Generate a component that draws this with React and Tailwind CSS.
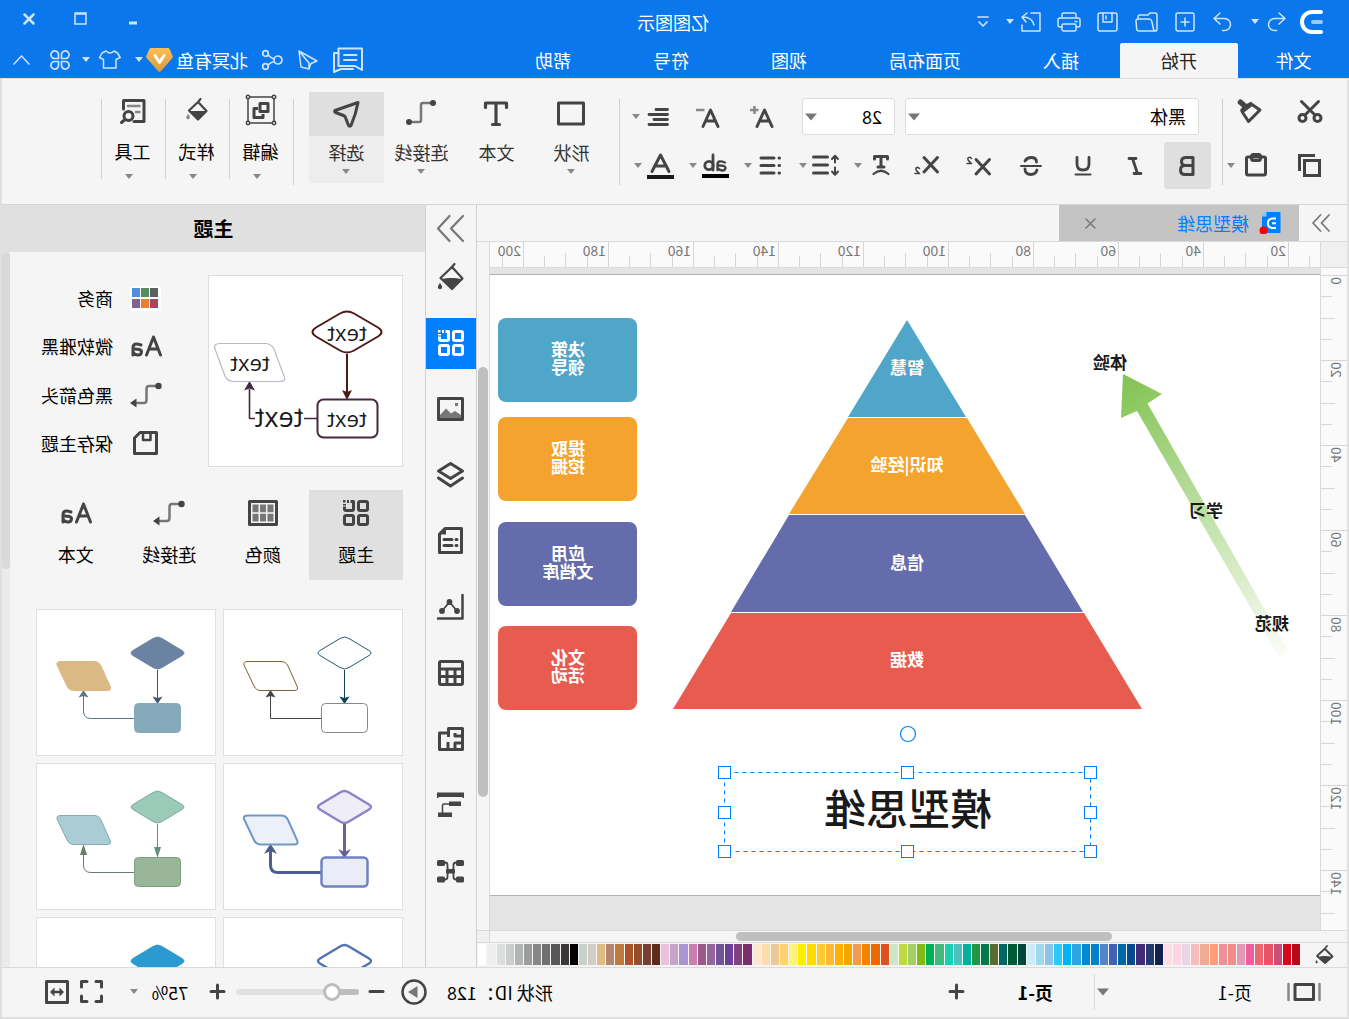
import React from "react";

const SWATCHES = (
  "b50a17 d8071b c94f77 e85467 eb6873 ea5f9c e398b5 ef8e88 f08e9a ff9e7a f0ab94 f6bebb ead5e6 ffd4e5 ffdfe5 " +
  "112250 223a70 442b78 064a8c 0067a5 4062b0 5485c8 0080cd 008bd0 2ca5e0 00b4f4 2fc8fb 8bc3eb 9ed8ef ccebf5 " +
  "00473a 005a36 00695f 576d30 007a4a 1f9744 00b09d 50bfc0 19cfb2 47b87d 00b056 82bb13 a3d065 c0d93f cde6c7 " +
  "e2501f eb6a00 f08400 f29954 f0a800 ffb000 ffb833 fbcb34 ffdb00 ffed00 fff180 ffd16f ebca98 ffdbac fee7d0 " +
  "7a2e70 834083 6a4196 745398 95659d 9c5a8a cd7cb0 ac94d0 c6a4c9 ebc2db 5e2b1c 773e31 954e2a ab5427 bf793f " +
  "b5866d debb87 d4ccc6 c8d2ca 000000 3d3838 595757 707070 888888 9c9e9d b3b5b5 cccece dcdddd eeeeee ffffff"
).split(" ");

function Icon({ w = 24, h = 24, sw = 2, children }) {
  return (
    <svg
      width={w}
      height={h}
      viewBox={`0 0 ${w} ${h}`}
      fill="none"
      stroke="currentColor"
      strokeWidth={sw}
      strokeLinejoin="round"
      strokeLinecap="round"
      className="shrink-0 overflow-visible"
      aria-hidden="true"
    >
      {children}
    </svg>
  );
}

const solid = { fill: "currentColor", stroke: "none" };

function Caret({ wide }) {
  return wide ? (
    <svg width="12" height="8" viewBox="0 0 12 8" className="shrink-0" aria-hidden="true">
      <path d="M0 0.5H12L6 7.5Z" fill="#777" />
    </svg>
  ) : (
    <svg width="8" height="5" viewBox="0 0 8 5" className="shrink-0" aria-hidden="true">
      <path d="M0 0H8L4 5Z" fill="currentColor" />
    </svg>
  );
}

function Btn({ label, className = "", children }) {
  return (
    <button type="button" aria-label={label} className={`flex shrink-0 items-center justify-center ${className}`}>
      {children}
    </button>
  );
}

/* ---------- shared icons ---------- */

const Bucket = () => (
  <Icon w={26} h={28} sw={2.2}>
    <path d="M9.500 1L13 5" />
    <path d="M12 4L23.500 15L12 26L1.500 15.500Z" />
    <path d="M2.500 16C8 14.500 17 14.500 22.500 16L12 26Z" {...solid} />
    <path d="M24 20c1.500 2 2.200 3 2.200 4a2.200 2.200 0 0 1-4.400 0c0-1 .7-2 2.200-4z" {...solid} />
  </Icon>
);

const ThemeGrid = () => (
  <Icon w={26} h={26} sw={3}>
    <rect x="1.500" y="1.500" width="9" height="9" rx="1.500" />
    <rect x="1.500" y="15.500" width="9" height="9" rx="1.500" />
    <rect x="15.500" y="15.500" width="9" height="9" rx="1.500" />
    <path d="M18.500 1.500H15.500V9A1.500 1.500 0 0 0 17 10.500H23A1.500 1.500 0 0 0 24.500 9V6.500" strokeLinecap="butt" />
    <path d="M20 0h2v3h-2zM23.500 0H26v2.500h-2.500zM23 4h3v1.500h-3z" {...solid} />
  </Icon>
);

const Elbow = () => (
  <Icon w={32} h={26} sw={2.500}>
    <g stroke="#777">
      <path d="M5 4H13Q15.500 4 15.500 7V18Q15.500 21 18 21H25" />
    </g>
    <circle cx="3.500" cy="4" r="3.200" {...solid} />
    <path d="M25.500 16.500L32 21L25.500 25.500Z" {...solid} />
  </Icon>
);

const AaIcon = () => (
  <Icon w={32} h={22} sw={3}>
    <path d="M1.500 20L8.500 2L15.500 20M4 14H13" />
    <path d="M21 10Q29 7 29 13V20M29 14Q20.500 13.500 20.500 17Q21 20.500 24.500 20Q28 19.500 29 17" />
  </Icon>
);

/* ---------- title bar ---------- */

function TitleBar() {
  return (
    <div className="flex h-[43px] items-center text-[#cfe3fb]">
      <div className="ml-[26px] flex w-6 items-center text-white">
        <Icon w={24} h={24} sw={4}>
          <path d="M2 2H11A10 10 0 0 1 11 22H2" />
          <path d="M2 12H10" stroke="#9cc8f8" strokeLinecap="round" />
        </Icon>
      </div>
      <Btn label="撤销" className="ml-1 w-9">
        <Icon w={19} h={20} sw={1.500}>
          <path d="M7 1L1 6.500L7 12M1 6.500H11.500A6 6 0 0 1 11.500 18.500H9.500" />
        </Icon>
      </Btn>
      <Btn label="撤销选项" className="w-2">
        <Caret />
      </Btn>
      <Btn label="重做" className="ml-2 w-10">
        <Icon w={19} h={20} sw={1.500}>
          <path d="M12 1L18 6.500L12 12M18 6.500H7.500A6 6 0 0 0 7.500 18.500H9.500" />
        </Icon>
      </Btn>
      <Btn label="新建" className="w-9">
        <Icon w={20} h={20} sw={1.500}>
          <rect x="1" y="1" width="18" height="18" rx="2" />
          <path d="M10 6V14M6 10H14" />
        </Icon>
      </Btn>
      <Btn label="打开" className="w-10">
        <Icon w={23} h={20} sw={1.500}>
          <path d="M1 17V3Q1 1 3 1H8L10 3H18Q20 3 20 5V7M2 19H19Q21 19 21.300 17L22 9Q22 7 20 7H9Q7 7 6.300 9L4.500 17Q4 19 2.500 19Q1 19 1 17" />
        </Icon>
      </Btn>
      <Btn label="保存" className="w-[38px]">
        <Icon w={21} h={20} sw={1.500}>
          <rect x="1" y="1" width="19" height="18" rx="2" />
          <path d="M6 1V10H15V1M12 4V7" />
        </Icon>
      </Btn>
      <Btn label="打印" className="w-10">
        <Icon w={24} h={20} sw={1.500}>
          <path d="M5 6V3Q5 1 7 1H17Q19 1 19 3V6M5 15H3Q1 15 1 13V8Q1 6 3 6H21Q23 6 23 8V13Q23 15 21 15H19M4 9.500H6" />
          <rect x="5" y="12" width="14" height="7" rx="1.500" />
        </Icon>
      </Btn>
      <Btn label="导出" className="w-9">
        <Icon w={20} h={20} sw={1.500}>
          <path d="M10 1H1V19H19V13M7 13Q9 5 18 5M14 1L19 5L15 10" />
        </Icon>
      </Btn>
      <Btn label="导出选项" className="w-1.5">
        <Caret />
      </Btn>
      <Btn label="自定义快速访问栏" className="ml-[18px] w-3">
        <Icon w={12} h={12} sw={1.700}>
          <path d="M1 1H11M2 6L6 10L10 6" />
        </Icon>
      </Btn>
      <h1 className="mx-auto pr-[210px] text-lg leading-6 whitespace-nowrap text-white">亿图图示</h1>
      <Btn label="最小化" className="w-[52px]">
        <Icon w={10} h={12} sw={3}>
          <path d="M1 7H9" strokeLinecap="butt" />
        </Icon>
      </Btn>
      <Btn label="最大化" className="w-[52px] pb-1.5">
        <Icon w={13} h={13} sw={1.500}>
          <path d="M1 1H12V12H1ZM1 2H12" strokeLinejoin="miter" />
        </Icon>
      </Btn>
      <Btn label="关闭" className="mr-[3px] w-[52px] pb-1.5">
        <Icon w={12} h={12} sw={2.500}>
          <path d="M1.500 1.500L10.500 10.500M10.500 1.500L1.500 10.500" />
        </Icon>
      </Btn>
    </div>
  );
}

function MenuBar() {
  return (
    <div className="flex h-[35px] items-stretch text-lg text-white">
      <nav className="flex items-stretch">
        <button type="button" className="w-[111px] pb-0.5">文件</button>
        <button type="button" className="rounded-t-xs bg-[#f5f5f5] px-[41px] pb-0.5 text-[#222]">开始</button>
        {["插入", "页面布局", "视图", "符号", "帮助"].map((t) => (
          <button type="button" key={t} className="px-[41px] pb-0.5">
            {t}
          </button>
        ))}
      </nav>
      <div className="ml-auto flex items-center pr-3 pb-0.5 text-[#cfe3fb]">
        <Btn label="消息" className="w-9">
          <Icon w={30} h={26} sw={2}>
            <path d="M1 1.500H24.500V19H8L1 23Z" />
            <path d="M6.500 8H19M6.500 13H19" />
            <path d="M24.500 6H29V25L22 22H10" />
          </Icon>
        </Btn>
        <Btn label="发送" className="ml-2 w-7">
          <Icon w={20} h={20} sw={1.500}>
            <path d="M19 1L1 11L7 13.500L9 19L17 17L19 1L9 13V19" />
          </Icon>
        </Btn>
        <Btn label="分享" className="ml-2 w-7">
          <Icon w={22} h={20} sw={1.700}>
            <circle cx="5" cy="10" r="4" />
            <circle cx="17.500" cy="3.500" r="2.800" />
            <circle cx="17.500" cy="16.500" r="2.800" />
            <path d="M9 9Q12.500 7.500 15 5M9 11.500Q12.500 12.500 15 15" />
          </Icon>
        </Btn>
        <span className="ml-2.5 text-lg whitespace-nowrap text-white">北冥有鱼</span>
        <Btn label="会员" className="mr-px ml-0.5 w-7">
          <svg width="27" height="24" viewBox="0 0 27 24" aria-hidden="true">
            <defs>
              <linearGradient id="vip" x1="0" y1="0" x2="0" y2="1">
                <stop offset="0" stopColor="#fdbe52" />
                <stop offset="1" stopColor="#d99b3c" />
              </linearGradient>
            </defs>
            <path d="M5 0H22Q23 0 23.600 1L26.600 8Q27 9 26.400 10L14.800 23.300Q13.500 24.500 12.200 23.300L.6 10Q0 9 .4 8L3.400 1Q4 0 5 0Z" fill="url(#vip)" />
            <path d="M9 7.500L13.500 14.500L18 7.500" fill="none" stroke="#fff" strokeWidth="3" strokeLinecap="round" strokeLinejoin="round" />
          </svg>
        </Btn>
        <Btn label="会员选项" className="w-3">
          <Caret />
        </Btn>
        <Btn label="皮肤" className="ml-[9px] w-7">
          <Icon w={22} h={19} sw={1.500}>
            <path d="M7 1Q11 5 15 1L19 3L21.500 7.500L17.500 9.500V18H5V9.500L.8 7.500L3.500 3Z" />
          </Icon>
        </Btn>
        <Btn label="皮肤选项" className="ml-1 w-3">
          <Caret />
        </Btn>
        <Btn label="应用" className="ml-2 w-6">
          <Icon w={20} h={20} sw={1.700}>
            <path d="M8.500 8.500H5A3.800 3.800 0 1 1 8.500 5ZM11.500 8.500H15A3.800 3.800 0 1 0 11.500 5ZM8.500 11.500H5A3.800 3.800 0 1 0 8.500 15ZM11.500 11.500H15A3.800 3.800 0 1 1 11.500 15Z" />
          </Icon>
        </Btn>
        <Btn label="收起功能区" className="ml-4 w-5">
          <Icon w={17} h={10} sw={1.500}>
            <path d="M1 9L8.500 1L16 9" />
          </Icon>
        </Btn>
      </div>
    </div>
  );
}

/* ---------- ribbon ---------- */

function Picker({ label, value, className }) {
  return (
    <label className={`flex h-[37px] items-center rounded-[3px] border border-[#dcdcdc] bg-white pr-0.5 ${className}`}>
      <select
        aria-label={label}
        defaultValue={value}
        className="h-[35px] min-w-0 flex-1 appearance-none bg-transparent pl-3 text-lg leading-[33px] text-black outline-none"
      >
        <option>{value}</option>
      </select>
      <Caret wide />
    </label>
  );
}

function Pair({ label, children }) {
  return (
    <Btn label={label} className="h-[47px] gap-[5px]">
      <span className="flex w-7 justify-center">{children}</span>
      <span className="text-[#888]">
        <Caret />
      </span>
    </Btn>
  );
}

function BigTool({ label, caret = true, active, children }) {
  return (
    <button
      type="button"
      className={`flex w-[75px] flex-col items-center rounded-xs pb-[9px] text-[#333] ${active ? "bg-[#ededed]" : ""}`}
    >
      <span className={`flex h-11 w-full items-center justify-center text-[#444] ${active ? "bg-[#dfdfdf]" : ""}`}>{children}</span>
      <span className="mt-[3px] text-lg leading-[27px]">{label}</span>
      <span className={`mt-[3px] text-[#888] ${caret ? "" : "invisible"}`}>
        <Caret />
      </span>
    </button>
  );
}

function GroupTool({ label, children }) {
  return (
    <button type="button" className="flex w-16 flex-col items-center border-r border-[#cfcfcf] text-black">
      <span className="flex h-6 items-center text-[#444]">{children}</span>
      <span className="mt-[15px] ml-0.5 text-lg leading-[27px]">{label}</span>
      <span className="mt-[9px] ml-2 text-[#888]">
        <Caret />
      </span>
    </button>
  );
}

const cell = "h-[47px] w-[52px]";

function Ribbon() {
  return (
    <div className="flex h-[126px] shrink-0 items-start border-b border-[#d6d6d6] bg-[#f5f5f5] text-[#444]">
      <div className="mt-5 flex h-[86px] w-[125px] flex-col justify-between border-r border-[#cfcfcf] pl-[23px]">
        <div className="flex h-6 items-center">
          <Btn label="剪切" className="w-7">
            <Icon w={24} h={23} sw={3}>
              <circle cx="4.500" cy="18" r="3.500" />
              <circle cx="19.500" cy="18" r="3.500" />
              <path d="M3.500 1.500L17 15M20.500 1.500L7 15" />
            </Icon>
          </Btn>
          <Btn label="格式刷" className="ml-8 w-7">
            <Icon w={25} h={24} sw={3}>
              <path d="M10 5.500L2 11L13.500 22.500L20 12.500" />
              <path d="M10.500 2.500L15.500 5L19.500 8L22 11L19.500 14.500L9 6.500Z" {...solid} />
              <path d="M16 8L21.500 3.200" strokeWidth="5.500" />
            </Icon>
          </Btn>
        </div>
        <div className="mb-1 flex h-8 items-center">
          <Btn label="复制" className="w-7">
            <Icon w={23} h={23} sw={3}>
              <rect x="2" y="6.500" width="15" height="15" strokeLinejoin="miter" transform="translate(-0.500 0)" />
              <path d="M6 1.500H21.500V17" strokeLinecap="butt" strokeLinejoin="miter" />
            </Icon>
          </Btn>
          <Btn label="粘贴" className="ml-[26px] w-7">
            <Icon w={22} h={24} sw={3}>
              <rect x="1.500" y="4" width="19" height="18" rx="1.500" />
              <rect x="6.500" y="1.500" width="9" height="6" rx="2" />
            </Icon>
          </Btn>
          <Btn label="粘贴选项" className="ml-[7px] w-2 text-[#888]">
            <Caret />
          </Btn>
        </div>
      </div>

      <div className="mt-[19px] ml-[11px] flex h-[92px] flex-col gap-[7px]">
        <div className="flex h-[37px] items-center pl-3">
          <Picker label="字体" value="黑体" className="w-[294px]" />
          <Picker label="字号" value="28" className="ml-2.5 w-[93px]" />
          <Btn label="增大字号" className="ml-7 w-6">
            <Icon w={24} h={22} sw={3}>
              <path d="M2 20.500L9.500 4L17 20.500M4.500 15H14.500" />
              <path d="M19.500 0V8M15.500 4H24" stroke="#888" strokeWidth="2.500" strokeLinecap="butt" />
            </Icon>
          </Btn>
          <Btn label="减小字号" className="ml-[30px] w-6">
            <Icon w={24} h={22} sw={3}>
              <path d="M2 20.500L9.500 4L17 20.500M4.500 15H14.500" />
              <path d="M15.500 4H24" stroke="#888" strokeWidth="2.500" strokeLinecap="butt" />
            </Icon>
          </Btn>
          <Btn label="对齐" className="ml-[23px] gap-[5px]">
            <span className="flex w-7 justify-center">
              <Icon w={21} h={18} sw={2.800}>
                <path d="M1.500 1.500H13M1.500 6.500H20M1.500 11.500H15M1.500 16.500H20" />
              </Icon>
            </span>
            <span className="text-[#888]">
              <Caret />
            </span>
          </Btn>
        </div>
        <div className="flex h-[47px] items-center">
          <Btn label="加粗" className="size-[47px] rounded-[3px] bg-[#dfdfdf]">
            <Icon w={16} h={20} sw={3}>
              <path d="M2 1.500H9Q13.500 1.500 13.500 5.500Q13.500 9.500 9 9.500H2H10Q14.500 9.500 14.500 14Q14.500 18.500 10 18.500H2Z" />
            </Icon>
          </Btn>
          <Btn label="斜体" className={`ml-[3px] ${cell}`}>
            <Icon w={16} h={18} sw={2.800}>
              <path d="M7 1.500H14M2 16.500H9M10.500 1.500L5.500 16.500" />
            </Icon>
          </Btn>
          <Btn label="下划线" className={cell}>
            <Icon w={16} h={19} sw={2.800}>
              <path d="M2 1.500V8Q2 14 8 14Q14 14 14 8V1.500" />
              <path d="M.5 18.500H15.500" strokeWidth="2" />
            </Icon>
          </Btn>
          <Btn label="删除线" className={cell}>
            <Icon w={22} h={20} sw={2.800}>
              <path d="M17 5Q15 1.500 11 1.500Q5.500 1.500 5.500 6M5 14Q6.500 18.500 11 18.500Q17 18.500 17 13" />
              <path d="M1 10H21" strokeWidth="2" />
            </Icon>
          </Btn>
          <Btn label="上标" className={cell}>
            <Icon w={24} h={19} sw={3}>
              <path d="M1.500 3.500L15 18M15 3.500L1.500 18" />
              <path d="M19.500 2.500Q21 .5 23 2Q24 4 19.500 7.500H24" strokeWidth="1.500" />
            </Icon>
          </Btn>
          <Btn label="下标" className={cell}>
            <Icon w={24} h={19} sw={3}>
              <path d="M1.500 1.500L15 16M15 1.500L1.500 16" />
              <path d="M19.500 12.500Q21 10.500 23 12Q24 14 19.500 17.500H24" strokeWidth="1.500" />
            </Icon>
          </Btn>
          <div className="ml-1.5 flex gap-3.5">
            <Pair label="文字弧形">
              <Icon w={18} h={21} sw={3}>
                <path d="M2.500 4V1.500H15.500V4M9 1.500V11.500M6 12H12" />
                <path d="M1.500 19Q9 12.500 16.500 19" strokeWidth="2.200" />
              </Icon>
            </Pair>
            <Pair label="行距">
              <Icon w={27} h={21} sw={3}>
                <path d="M11.500 2H25.500M11.500 10H25.500M11.500 18H25.500" />
                <path d="M4 1V7.500M1 4L4 .8L7 4M4 12.500V19M1 16.500L4 19.700L7 16.500" strokeWidth="2" />
              </Icon>
            </Pair>
            <Pair label="项目符号">
              <Icon w={21} h={19} sw={3}>
                <path d="M1.500 2H2M1.500 9.500H2M1.500 17H2M7 2H20M7 9.500H20M7 17H20" />
              </Icon>
            </Pair>
            <Pair label="突出显示">
              <Icon w={27} h={25} sw={2.800}>
                <path d="M4 9.500Q11.500 6.500 11.500 11.500V17M11.500 12.500Q3.500 12 3.500 15Q4 18 7 17.500Q10 17 11.500 15" strokeWidth="2.400" />
                <path d="M16 2V17" />
                <circle cx="20" cy="12.500" r="4.200" />
                <path d="M0 21H27V25H0Z" fill="#000" stroke="none" />
              </Icon>
            </Pair>
            <Pair label="字体颜色">
              <Icon w={27} h={26} sw={3}>
                <path d="M5 18.500L13.500 2L22 18.500M7.500 13H19.500" />
                <path d="M0 22H27V26H0Z" fill="#1a1a1a" stroke="none" />
              </Icon>
            </Pair>
          </div>
        </div>
      </div>

      <div className="mt-5 ml-3 h-[86px] border-r border-[#cfcfcf]" />
      <div className="mt-[13px] ml-2.5 flex">
        <BigTool label="形状">
          <Icon w={28} h={26} sw={3}>
            <path d="M1.500 2H26.500V23H1.500Z" />
          </Icon>
        </BigTool>
        <BigTool label="文本" caret={false}>
          <Icon w={24} h={26} sw={3.200}>
            <path d="M1.500 6.500V2H22.500V6.500M12 2V23M8.500 23.500H15.500" />
          </Icon>
        </BigTool>
        <BigTool label="连接线">
          <Icon w={30} h={26} sw={2.500}>
            <path d="M5 2H13Q15 2 15 4V19Q15 21 17 21H25" stroke="#777" />
            <circle cx="3" cy="2" r="3" {...solid} />
            <circle cx="27" cy="21" r="3" {...solid} />
          </Icon>
        </BigTool>
        <BigTool label="选择" active>
          <Icon w={27} h={27} sw={3}>
            <path d="M2 1.500L25 9.500Q26 11 24.500 11.500L16.500 14.500Q15 15 14.500 16.500L11.500 24.500Q10.500 26 9 24.500Q4 13 2 1.500Z" />
          </Icon>
        </BigTool>
      </div>
      <div className="mt-5 ml-[15px] h-[86px] border-r border-[#cfcfcf]" />
      <div className="mt-5 flex">
        <GroupTool label="编辑">
          <Icon w={30} h={30} sw={1.500}>
            <path d="M2 1H28V27H2Z" />
            <g fill="#f5f5f5">
              <circle cx="2" cy="1" r="1.700" />
              <circle cx="28" cy="1" r="1.700" />
              <circle cx="2" cy="27" r="1.700" />
              <circle cx="28" cy="27" r="1.700" />
            </g>
            <path d="M8 7.500H16V15.500H8ZM18 12.500H22V21.500H13V18" strokeWidth="3" strokeLinecap="butt" />
          </Icon>
        </GroupTool>
        <GroupTool label="样式">
          <Icon w={22} h={24} sw={2.200}>
            <path d="M7.500 0L10 3L19 11.500L10 20.500L1.500 12L9 4" />
            <path d="M2 12H18.500L10 21Z" {...solid} />
            <path d="M20 15q2.500 3 1.500 4.500a2 2 0 0 1-3.500-1q0-1.500 2-3.500z" fill="#888" stroke="none" />
          </Icon>
        </GroupTool>
        <GroupTool label="工具">
          <Icon w={26} h={26} sw={3}>
            <path d="M12 23.500H2V2.500H22.500V11" />
            <path d="M6.500 8H18M6.500 14H10" stroke="#888" strokeWidth="2.500" />
            <circle cx="17.500" cy="18" r="4.500" />
            <path d="M21 21.500L24.500 24.500" />
          </Icon>
        </GroupTool>
      </div>
    </div>
  );
}

/* ---------- drawing area ---------- */

function DocumentTabs() {
  return (
    <div className="flex h-[37px] shrink-0 items-stretch border-b border-[#dadada] bg-[#f5f5f5]">
      <Btn label="展开左侧面板" className="w-12 pl-1 text-[#777]">
        <Icon w={18} h={18} sw={1.800}>
          <path d="M1 1L8.500 9L1 17M9.500 1L17 9L9.500 17" />
        </Icon>
      </Btn>
      <div className="flex w-60 items-center bg-[#c4c4c4] pl-[18px]">
        <svg width="22" height="22" viewBox="0 0 22 22" aria-hidden="true">
          <path d="M1.500 0H14.500L19 4.500V21H1.500Q.5 21 .5 20V1Q.5 0 1.500 0Z" fill="#0080ff" />
          <path d="M14.500 0L19 4.500H14.500Z" fill="#8cc6ff" />
          <path d="M5 6.500H9A4.800 4.800 0 0 1 9 16H5M5 11.300H9" fill="none" stroke="#fff" strokeWidth="2" />
          <circle cx="17.500" cy="18.500" r="4" fill="#f00" />
        </svg>
        <span className="ml-2.5 text-lg whitespace-nowrap text-[#0080ff]">模型思维</span>
        <Btn label="关闭标签" className="mr-6 ml-auto w-4 text-[#777]">
          <Icon w={11} h={11} sw={1.500}>
            <path d="M1 1L10 10M10 1L1 10" />
          </Icon>
        </Btn>
      </div>
    </div>
  );
}

function TopRuler() {
  return (
    <div className="flex h-[26px] shrink-0 border-b border-[#dadada]">
      <div className="w-[27px] shrink-0 border-r border-[#dadada] bg-[#f0f0f0]" />
      <div className="flex min-w-0 flex-1 overflow-hidden bg-[#fafafa]">
        <div className="-ml-[54px] flex">
          {Array.from({ length: 11 }, (_, i) => (
            <div key={i} className="flex w-[85px] shrink-0 items-end">
              <div className="h-full flex-1 border-l border-[#d6d6d6]">
                {i > 0 && <span className="block w-0 pl-0.5 text-sm leading-4 text-[#777]">{i * 20}</span>}
              </div>
              <div className="h-[11px] flex-1 border-l border-[#d6d6d6]" />
              <div className="h-3.5 flex-1 border-l border-[#d6d6d6]" />
              <div className="h-[11px] flex-1 border-l border-[#d6d6d6]" />
            </div>
          ))}
        </div>
      </div>
    </div>
  );
}

function SideRuler() {
  return (
    <div className="flex w-[27px] shrink-0 flex-col overflow-hidden border-r border-[#dadada] bg-[#fafafa] pt-[7px]">
      {Array.from({ length: 8 }, (_, i) => (
        <div key={i} className="flex h-[85px] shrink-0 flex-col items-end">
          <div className="relative w-full flex-1 border-t border-[#d6d6d6]">
            <span className="absolute top-px left-px rotate-180 text-sm leading-[18px] text-[#777] [writing-mode:vertical-rl]">
              {i * 20}
            </span>
          </div>
          <div className="w-[11px] flex-1 border-t border-[#d6d6d6]" />
          <div className="w-3.5 flex-1 border-t border-[#d6d6d6]" />
          <div className="w-[11px] flex-1 border-t border-[#d6d6d6]" />
        </div>
      ))}
    </div>
  );
}

const LAYERS = [
  { fill: "#4fa6c9", points: "413,52 354,149 472,149", y: 106, text: "智慧" },
  { fill: "#f3a32e", points: "353,150 295,246 531,246 472,150", y: 203, text: "知识|经验" },
  { fill: "#656cab", points: "295,247 237,344 589,344 531,247", y: 301, text: "信息" },
  { fill: "#e85c4f", points: "236,345 178,441 647,441 589,345", y: 398, text: "数据" },
];

const BOXES = [
  { fill: "#4fa6c9", y: 50, lines: ["决策", "领导"] },
  { fill: "#f3a32e", y: 149, lines: ["提取", "挖掘"] },
  { fill: "#656cab", y: 254, lines: ["应用", "文档库"] },
  { fill: "#e85c4f", y: 358, lines: ["文化", "活动"] },
];

const HANDLES = [
  [229, 504], [412, 504], [595, 504], [229, 544], [595, 544], [229, 583], [412, 583], [595, 583],
];

function Diagram() {
  return (
    <svg width="830" height="620" viewBox="0 0 830 620" className="absolute top-0 left-0" textAnchor="middle">
      <defs>
        <linearGradient id="growth" gradientUnits="userSpaceOnUse" x1="198" y1="115" x2="36" y2="388">
          <stop offset="0" stopColor="#84c455" />
          <stop offset="1" stopColor="#fbfdf9" />
        </linearGradient>
      </defs>
      <path d="M197 106L158 126L172.500 135.500L31 384L41 389L183 143L199 150Z" fill="url(#growth)" />
      {LAYERS.map((l) => (
        <g key={l.text}>
          <polygon points={l.points} fill={l.fill} />
          <text x="413" y={l.y} fill="#fff" fontSize="17" fontWeight="700">{l.text}</text>
        </g>
      ))}
      {BOXES.map((b) => (
        <g key={b.y} fill="#fff" fontSize="17" fontWeight="700">
          <rect x="683" y={b.y} width="139" height="84" rx="8" fill={b.fill} />
          <text x="752" y={b.y + 38}>{b.lines[0]}</text>
          <text x="752" y={b.y + 56}>{b.lines[1]}</text>
        </g>
      ))}
      <g fill="#1a1a1a" fontSize="17" fontWeight="700">
        <text x="210" y="101">体验</text>
        <text x="114" y="249">学习</text>
        <text x="48" y="362">规范</text>
      </g>
      <text x="412" y="557" fill="#1a1a1a" fontSize="42" fontWeight="500">模型思维</text>
      <rect x="229.500" y="504.500" width="366" height="79" fill="none" stroke="#0080ff" strokeDasharray="4 4" />
      <circle cx="412" cy="466" r="7.500" fill="#fff" stroke="#0080ff" strokeWidth="1.200" />
      {HANDLES.map(([x, y]) => (
        <rect key={`${x}-${y}`} x={x - 5.500} y={y - 5.500} width="12" height="12" fill="#fff" stroke="#0080ff" />
      ))}
    </svg>
  );
}

function Workspace() {
  return (
    <main className="flex min-w-0 flex-1 flex-col">
      <DocumentTabs />
      <div className="flex min-h-0 flex-1">
        <div className="flex min-w-0 flex-1 flex-col">
          <TopRuler />
          <div className="flex min-h-0 flex-1">
            <SideRuler />
            <div className="relative min-w-0 flex-1 overflow-hidden bg-[#e4e4e4] pt-1.5">
              <div className="h-[622px] border-y border-[#b0b0b0] bg-white" />
              <Diagram />
            </div>
          </div>
        </div>
        <div className="w-[13px] shrink-0 border-l border-[#dadada] bg-[#f5f5f5] px-px pt-[125px]">
          <div className="h-[430px] rounded-full bg-[#bfbfbf]" />
        </div>
      </div>
      <div className="flex h-[13px] shrink-0 border-y border-[#dadada] bg-[#f5f5f5]">
        <div className="flex flex-1 items-center border-r border-[#dadada]">
          <div className="ml-[235px] h-[9px] w-[376px] rounded-full bg-[#bfbfbf]" />
        </div>
        <div className="w-3 bg-[#f0f0f0]" />
      </div>
      <div className="flex h-6 shrink-0 items-center bg-[#f5f5f5] pr-0.5 text-[#444]">
        <Btn label="填充颜色" className="w-[47px] pr-0.5">
          <Icon w={19} h={20} sw={1.800}>
            <path d="M7 1L9.500 4L17 11L9 18L1.500 11.500L8.500 4.500" />
            <path d="M2 12Q9 10 16.500 12L9 18.500Z" {...solid} />
            <path d="M17.500 15q1.500 2 .8 3a1.200 1.200 0 0 1-2-.5q0-1 1.200-2.500z" {...solid} />
          </Icon>
        </Btn>
        <div className="mb-px flex h-[21px] min-w-0 flex-1 gap-px">
          {SWATCHES.map((c) => (
            <button type="button" key={c} aria-label={`#${c}`} className="min-w-0 flex-1" style={{ backgroundColor: `#${c}` }} />
          ))}
        </div>
      </div>
    </main>
  );
}

/* ---------- tool strip ---------- */

const STRIP = [
  { label: "填充", icon: <Bucket /> },
  { label: "主题", icon: <ThemeGrid />, active: true },
  {
    label: "图片",
    icon: (
      <Icon w={27} h={24} sw={3}>
        <rect x="1.500" y="1.500" width="24" height="21" />
        <path d="M3 21V18L9 14L13 16.500L18 11.500L24 18V21Z" fill="#777" stroke="none" />
        <path d="M6 6H9V9H6Z" fill="#777" stroke="none" />
      </Icon>
    ),
  },
  {
    label: "图层",
    icon: (
      <Icon w={27} h={26} sw={3}>
        <path d="M13.500 1.500L25.500 9L13.500 16.500L1.500 9Z" />
        <path d="M1.500 16L13.500 24L25.500 16" />
      </Icon>
    ),
  },
  {
    label: "属性",
    icon: (
      <Icon w={25} h={27} sw={3}>
        <path d="M1.500 1.500H18L23.500 7V25.500H1.500Z" />
        <path d="M17 1V7.500H24Z" {...solid} />
        <path d="M6 12.500H7M11 12.500H19M6 18.500H7M11 18.500H19" />
      </Icon>
    ),
  },
  {
    label: "图表",
    icon: (
      <Icon w={27} h={26} sw={2.500}>
        <path d="M1.500 1V24.500H26" />
        <path d="M7 17L14.500 8L22 17" strokeWidth="1.800" />
        <circle cx="7" cy="17" r="2.900" {...solid} />
        <circle cx="14.500" cy="8" r="2.900" {...solid} />
        <circle cx="22" cy="17" r="2.900" {...solid} />
      </Icon>
    ),
  },
  {
    label: "表格",
    icon: (
      <Icon w={26} h={26} sw={3}>
        <rect x="1.500" y="1.500" width="23" height="23" rx="1.500" />
        <path d="M1.500 9H24.500M1.500 16.500H24.500M9 9V24M17 9V24" />
      </Icon>
    ),
  },
  {
    label: "平面图",
    icon: (
      <Icon w={26} h={24} sw={3}>
        <path d="M1.500 1.500H15.500V6H24.500V22.500H1.500Z" />
        <path d="M1.500 9H9V6M15.500 6V10M16 22V15M1.500 16H9V22" strokeLinecap="butt" />
      </Icon>
    ),
  },
  {
    label: "标题",
    icon: (
      <Icon w={27} h={25} sw={1.500}>
        <path d="M0 .5H27V6H25.500V5H1.500V6H0ZM3 9.500H15V14H3ZM12 20.500H26V25H12Z" {...solid} />
        <path d="M15 12H20Q21.500 12 21.500 13.500V21" />
      </Icon>
    ),
  },
  {
    label: "思维导图",
    icon: (
      <Icon w={27} h={24} sw={1.800}>
        <path d="M7 3.500H8Q10.500 3.500 10.500 6V8.500Q10.500 12 13.500 12Q16.500 12 16.500 15.500V18Q16.500 20.500 19 20.500H20M20 3.500H19Q16.500 3.500 16.500 6V8.500Q16.500 12 13.500 12Q10.500 12 10.500 15.500V18Q10.500 20.500 8 20.500H7" />
        <g {...solid}>
          <rect x="0" y="1" width="8" height="6" rx="1.500" />
          <rect x="19" y="1" width="8" height="6" rx="1.500" />
          <rect x="9" y="10" width="9" height="4.500" rx="1" />
          <rect x="0" y="17.500" width="8" height="6" rx="1.500" />
          <rect x="19" y="17.500" width="8" height="6" rx="1.500" />
        </g>
      </Icon>
    ),
  },
];

function ToolStrip() {
  return (
    <aside className="flex w-[52px] shrink-0 flex-col border-x border-[#cfcfcf] bg-[#f5f5f5] text-[#444]">
      <Btn label="收起面板" className="h-[47px] text-[#777]">
        <Icon w={27} h={27} sw={2.2}>
          <path d="M1 1L13 13.500L1 26M14.500 1L26 13.500L14.500 26" />
        </Icon>
      </Btn>
      <div className="flex flex-col gap-[15px]">
        {STRIP.map((s) => (
          <Btn key={s.label} label={s.label} className={`h-[51px] ${s.active ? "bg-[#0080ff] pb-0.5 text-white" : "pb-0.5"}`}>
            {s.icon}
          </Btn>
        ))}
      </div>
    </aside>
  );
}

/* ---------- theme panel ---------- */

function ThemeCard({ d, p, r, a, b, sw = 1, square, slim }) {
  return (
    <button type="button" aria-label="主题样式" className="h-[147px] border border-[#e0e0e0] bg-white">
      <svg width="178" height="145" viewBox="0 0 178 145" fill="none" strokeLinejoin="round" aria-hidden="true">
        <path
          d={square ? "M81 108.500H131.500V84" : "M81 108.500H124Q131.500 108.500 131.500 101V84"}
          stroke={b}
          strokeWidth={sw}
        />
        <path d="M57.500 60V90" stroke={a} strokeWidth={sw} />
        <path d={slim ? "M54 83H61L57.500 94Z" : "M52.500 86.500L57.500 88L62.500 86.500L57.500 94Z"} fill={a} />
        <path d={slim ? "M128 91H135L131.500 80Z" : "M126.500 87.500L131.500 86L136.500 87.500L131.500 80Z"} fill={b} />
        {sw > 2 && <path d="M51 85L57.500 88L64 85L57.500 94Z" fill={a} />}
        {sw > 2 && <path d="M125 90L131.500 87L138 90L131.500 80Z" fill={b} />}
        <path
          d="M53 28.500Q57.500 25.500 62 28.500L82 40.500Q86 43 82 45.500L62 57.500Q57.500 60.500 53 57.500L33 45.500Q29 43 33 40.500Z"
          fill={d[0]}
          stroke={d[1]}
          strokeWidth={sw > 2 ? 2.5 : sw}
        />
        <path
          d="M121 51.500H154Q159 51.500 158 55L148 76Q146 80.500 141 80.500H108Q103 80.500 105 76L114 56Q116 51.500 121 51.500Z"
          fill={p[0]}
          stroke={p[1]}
          strokeWidth={sw > 2 ? 2 : sw}
        />
        <rect x="34.500" y="93.500" width="46" height="29" rx="4" fill={r[0]} stroke={r[1]} strokeWidth={sw > 2 ? 2.5 : sw} />
      </svg>
    </button>
  );
}

const CARDS = [
  { d: ["#fff", "#1d5a75"], p: ["#fff", "#7a6233"], r: ["#fff", "#888"], a: "#0b4159", b: "#444", square: true },
  { d: ["#6b83a3", "#6b83a3"], p: ["#dab985", "#dab985"], r: ["#85abbb", "#85abbb"], a: "#46566e", b: "#5b7785" },
  { d: ["#efedf8", "#8c84cb"], p: ["#ecf1f9", "#7098c6"], r: ["#eaedf8", "#6d82c4"], a: "#6a6199", b: "#4d5f91", sw: 3 },
  { d: ["#9ccab9", "#7fa99a"], p: ["#aaccd5", "#86a9b4"], r: ["#99b69a", "#7f9f81"], a: "#678d80", b: "#64806a", slim: true },
  { d: ["#fff", "#5374b3"], p: ["#fff", "#5374b3"], r: ["#fff", "#5374b3"], a: "#5374b3", b: "#5374b3", sw: 3 },
  { d: ["#2b9ad0", "#2b9ad0"], p: ["#2b9ad0", "#2b9ad0"], r: ["#2b9ad0", "#2b9ad0"], a: "#2b9ad0", b: "#2b9ad0" },
];

function Preview() {
  return (
    <div className="w-[195px] shrink-0 border border-[#dedede] bg-white">
      <svg width="193" height="190" viewBox="0 0 193 190" fill="none" strokeLinejoin="round" textAnchor="middle" role="img" aria-label="主题预览">
        <g stroke="#4f1919" strokeWidth="2">
          <path d="M48 37.500Q55 33.500 62 37.500L86 51.500Q93 56 86 60.500L62 74.500Q55 78.500 48 74.500L24 60.500Q17 56 24 51.500Z" />
          <path d="M55 78V117" />
        </g>
        <path d="M50 114L55 116L60 114L55 124Z" fill="#4f1919" />
        <g stroke="#452a3f">
          <rect x="24.500" y="123.500" width="60" height="38" rx="6" strokeWidth="2" />
          <path d="M85 142.500H98M147 142.500H152.500V113" strokeWidth="1.600" />
        </g>
        <path d="M147 114.500L152.500 112.500L158 114.500L152.500 105Z" fill="#452a3f" />
        <path d="M137 67.500H182Q189 67.500 187 73L177 100Q174.500 105.500 168 105.500H122Q115.500 105.500 118 100L128 73Q131 67.500 137 67.500Z" stroke="#b9b9c6" strokeWidth="1.200" />
        <g fill="#1a1a1a" fontSize="22" fontFamily='"Open Sans", "Noto Sans", sans-serif'>
          <text x="55" y="65">text</text>
          <text x="55" y="151">text</text>
          <text x="152" y="95">text</text>
          <text x="123" y="151" fontSize="27">text</text>
        </g>
      </svg>
    </div>
  );
}

const PALETTE_CHIP = ["#5a625f", "#558c5d", "#4f8fdc", "#b53f62", "#f47a30", "#80648e"];

const OPTIONS = [
  {
    label: "商务",
    icon: (
      <svg width="31" height="25" viewBox="0 0 31 25" aria-hidden="true">
        <rect width="31" height="25" rx="2" fill="#fff" />
        {PALETTE_CHIP.map((c, i) => (
          <rect key={c} x={3 + (i % 3) * 9} y={i < 3 ? 2 : 13} width="8" height="9" fill={c} />
        ))}
      </svg>
    ),
  },
  { label: "微软雅黑", icon: <AaIcon /> },
  { label: "黑色箭头", icon: <Elbow /> },
  {
    label: "保存主题",
    icon: (
      <Icon w={25} h={24} sw={3}>
        <path d="M1.500 1.500H18L23.500 7V22.500H1.500Z" />
        <path d="M7.500 2V9H15V2" strokeWidth="2.500" />
      </Icon>
    ),
  },
];

const MODES = [
  { label: "主题", icon: <ThemeGrid />, active: true },
  {
    label: "颜色",
    icon: (
      <Icon w={30} h={26} sw={3}>
        <rect x="1.500" y="1.500" width="27" height="23" />
        <path d="M4.500 4.500H25.500V21.500H4.500Z" fill="#777" stroke="none" />
        <path d="M11.300 4V22M18.700 4V22M4 13H26" stroke="#f5f5f5" strokeWidth="1.500" strokeLinecap="butt" />
      </Icon>
    ),
  },
  { label: "连接线", icon: <Elbow /> },
  { label: "文本", icon: <AaIcon /> },
];

function ThemePanel() {
  return (
    <section className="flex w-[423px] shrink-0 flex-col bg-[#f5f5f5]">
      <h2 className="flex h-[47px] shrink-0 items-center justify-center bg-[#e0e0e0] text-xl leading-none font-bold text-black">
        主题
      </h2>
      <div className="flex min-h-0 flex-1">
        <div className="min-w-0 flex-1 overflow-hidden pt-[23px] pr-[26px] pl-[22px]">
          <div className="flex h-48">
            <Preview />
            <div className="-mt-px ml-11 flex flex-col">
              {OPTIONS.map((o) => (
                <button type="button" key={o.label} className="flex h-[49px] items-center text-[#444]">
                  <span className="flex w-9 justify-center">{o.icon}</span>
                  <span className="ml-[15px] text-lg whitespace-nowrap text-black">{o.label}</span>
                </button>
              ))}
            </div>
          </div>
          <div className="mt-[23px] mr-[-7px] grid grid-cols-4">
            {MODES.map((m) => (
              <button
                type="button"
                key={m.label}
                className={`flex h-[90px] flex-col items-center text-black ${m.active ? "bg-[#e0e0e0]" : ""}`}
              >
                <span className="flex h-[46px] items-center text-[#444]">{m.icon}</span>
                <span className="mt-[5px] text-lg leading-[27px]">{m.label}</span>
              </button>
            ))}
          </div>
          <div className="mt-[29px] grid grid-cols-2 gap-[7px]">
            {CARDS.map((c, i) => (
              <ThemeCard key={i} {...c} />
            ))}
          </div>
        </div>
        <div className="w-2 shrink-0 bg-[#ebebeb]">
          <div className="h-[317px] rounded-full bg-[#d9d9d9]" />
        </div>
      </div>
    </section>
  );
}

/* ---------- status bar ---------- */

function StatusBar() {
  return (
    <footer className="flex h-[50px] shrink-0 items-center border-t border-[#dadada] bg-[#f5f5f5] pb-0.5 text-lg leading-6 text-[#444]">
      <Btn label="页面视图" className="ml-[26px] w-[34px]">
        <Icon w={34} h={18} sw={3}>
          <path d="M7.500 1.500H26V16.500H7.500Z" />
          <path d="M1.500 1V17M32.500 1V17" stroke="#888" strokeWidth="2.500" />
        </Icon>
      </Btn>
      <div className="ml-[35px] flex h-9 w-[158px] items-center border-r border-[#dadada]">
        <span className="flex-1 text-black">页-1</span>
        <Btn label="页面列表" className="mr-0.5 w-3">
          <Caret wide />
        </Btn>
      </div>
      <button type="button" className="ml-[41px] font-bold text-black">页-1</button>
      <Btn label="添加页面" className="ml-[53px] w-4">
        <Icon w={15} h={15} sw={3}>
          <path d="M7.500 1V14M1 7.500H14" />
        </Icon>
      </Btn>
      <span className="mr-5 ml-auto whitespace-nowrap text-black">形状 ID：128</span>
      <Btn label="播放" className="w-[26px]">
        <Icon w={26} h={26} sw={2.500}>
          <circle cx="13" cy="13" r="11.500" />
          <path d="M9.500 7L19 13L9.500 19Z" fill="#777" stroke="none" />
        </Icon>
      </Btn>
      <Btn label="缩小" className="ml-4 w-4">
        <Icon w={15} h={15} sw={3}>
          <path d="M1 7.500H14" />
        </Icon>
      </Btn>
      <input
        type="range"
        aria-label="缩放"
        min="0"
        max="100"
        defaultValue="17"
        className="ml-2.5 h-[18px] w-[123px] appearance-none bg-transparent [&::-webkit-slider-runnable-track]:h-1.5 [&::-webkit-slider-runnable-track]:rounded-full [&::-webkit-slider-runnable-track]:bg-[linear-gradient(to_right,#bdbdbd_20%,#e0e0e0_20%)] [&::-webkit-slider-thumb]:-mt-1.5 [&::-webkit-slider-thumb]:size-[18px] [&::-webkit-slider-thumb]:appearance-none [&::-webkit-slider-thumb]:rounded-full [&::-webkit-slider-thumb]:border-3 [&::-webkit-slider-thumb]:border-[#bdbdbd] [&::-webkit-slider-thumb]:bg-white"
      />
      <Btn label="放大" className="ml-2.5 w-4">
        <Icon w={15} h={15} sw={3}>
          <path d="M7.500 1V14M1 7.500H14" />
        </Icon>
      </Btn>
      <Btn label="缩放比例" className="ml-[22px] w-[58px] gap-[14px]">
        <span className="text-black">75%</span>
        <span className="text-[#888]">
          <Caret />
        </span>
      </Btn>
      <Btn label="全屏" className="ml-[26px] w-6">
        <Icon w={23} h={23} sw={3}>
          <path d="M1.500 7V1.500H7M16 1.500H21.500V7M21.500 16V21.500H16M7 21.500H1.500V16" />
        </Icon>
      </Btn>
      <Btn label="适应窗口" className="mr-[43px] ml-[11px] w-6">
        <Icon w={24} h={24} sw={3}>
          <rect x="1.500" y="1.500" width="21" height="21" />
          <path d="M8 12H16" strokeWidth="2.500" />
          <path d="M9.500 7.500V16.500L5 12ZM14.500 7.500V16.500L19 12Z" {...solid} />
        </Icon>
      </Btn>
    </footer>
  );
}

export default function App() {
  return (
    <div className="flex h-screen w-full -scale-x-100 flex-col overflow-hidden bg-[#f5f5f5] font-['Noto_Sans_CJK_SC',sans-serif]">
      <header className="h-[78px] shrink-0 bg-[#0a78ec]">
        <TitleBar />
        <MenuBar />
      </header>
      <div className="flex min-h-0 flex-1 flex-col border-2 border-t border-[#e0e0e0]">
        <Ribbon />
        <div className="flex min-h-0 flex-1">
          <Workspace />
          <ToolStrip />
          <ThemePanel />
        </div>
        <StatusBar />
      </div>
    </div>
  );
}
